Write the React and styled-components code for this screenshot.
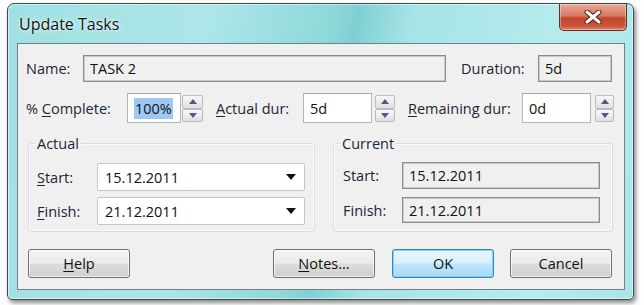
import React from 'react';
import styled, { createGlobalStyle, css } from 'styled-components';

const GlobalStyle = createGlobalStyle`
  html, body {
    margin: 0;
    background: #fdfdfd;
  }
  body {
    font-family: "Open Sans", "Noto Sans", sans-serif;
  }
`;

const Page = styled.div`
  width: 644px;
  height: 305px;
  box-sizing: border-box;
  padding: 3px 0 0 7px;
  overflow: hidden;
`;

const Window = styled.div`
  width: 627px;
  height: 297px;
  box-sizing: border-box;
  display: flex;
  flex-direction: column;
  padding: 0 8px 9px 9px;
  border: 1px solid #3d4b50;
  border-radius: 7px 7px 5px 5px;
  background: linear-gradient(100deg, #9fe0e2 0%, #ade6e8 30%, #8fd8da 48%, #7fd0d3 52%, #a6e4e6 60%, #b7ecee 85%, #a9e6e8 100%);
  box-shadow: 2px 3px 4px rgba(0, 0, 0, 0.45), inset 0 0 0 1px rgba(255, 255, 255, 0.55);
`;

const TitleBar = styled.div`
  height: 39px;
  display: flex;
  justify-content: space-between;
  align-items: flex-start;
  flex-shrink: 0;
`;

const Title = styled.span`
  padding: 9px 0 0 2px;
  font-size: 16px;
  color: #111;
  text-shadow: 0 0 6px rgba(255, 255, 255, 0.9), 0 0 2px rgba(255, 255, 255, 0.9);
`;

const CloseButton = styled.div`
  width: 68px;
  height: 27px;
  margin-right: -2px;
  box-sizing: border-box;
  display: flex;
  align-items: center;
  justify-content: center;
  border: 1px solid #6b2a20;
  border-top: none;
  border-radius: 0 0 5px 5px;
  background: linear-gradient(180deg, #e9a897 0%, #d77a64 45%, #c2452c 55%, #c9553a 85%, #e08a6c 100%);
  box-shadow: inset 0 0 0 1px rgba(255, 255, 255, 0.35);
`;

const Client = styled.div`
  flex: 1;
  display: flex;
  flex-direction: column;
  padding: 0 10px 0 8px;
  background: #f0f0f0;
  border: 1px solid #6f8286;
`;

const Row = styled.div`
  display: flex;
  align-items: center;
  height: ${p => p.$h}px;
  margin-top: ${p => p.$top}px;
  flex-shrink: 0;
`;

const Label = styled.span`
  width: ${p => p.$w}px;
  margin-left: ${p => p.$ml || 0}px;
  flex-shrink: 0;
  font-size: 14.5px;
  color: #1c2536;
  white-space: nowrap;
  u {
    text-decoration-thickness: 1px;
    text-underline-offset: 2px;
  }
`;

const fieldBase = css`
  box-sizing: border-box;
  flex-shrink: 0;
  display: flex;
  align-items: center;
  font-size: 14.5px;
  color: #111;
  white-space: nowrap;
`;

const ReadOnlyField = styled.div`
  ${fieldBase};
  width: ${p => p.$w}px;
  height: ${p => p.$h || 27}px;
  padding-left: 6px;
  background: #f0f0f0;
  border: 1px solid #8c8c8c;
  box-shadow: inset 0 0 0 1px #c9c9c9;
`;

const Input = styled.div`
  ${fieldBase};
  width: ${p => p.$w}px;
  height: 30px;
  padding-left: 6px;
  background: #fff;
  border: 1px solid #b4b6bb;
  border-top-color: #a3a6ab;
`;

const Selected = styled.span`
  background: #9cc8f3;
  padding: 1px 1px;
`;

const Spinner = styled.div`
  width: ${p => p.$w}px;
  height: 30px;
  margin-left: ${p => p.$ml}px;
  flex-shrink: 0;
  display: flex;
  flex-direction: column;
  justify-content: space-between;
  padding: 2px 0 1px;
  box-sizing: border-box;
`;

const SpinBtn = styled.div`
  height: 12px;
  display: flex;
  align-items: center;
  justify-content: center;
  border: 1px solid #b9bcc2;
  border-radius: 2px;
  background: linear-gradient(180deg, #f8f8f8 0%, #ececec 50%, #dfdfdf 100%);
`;

const Arrow = ({ down }) => (
  <svg width="8" height="5" viewBox="0 0 8 5">
    <path d={down ? 'M0 0 H8 L4 5 Z' : 'M0 5 H8 L4 0 Z'} fill="#4a5c82" />
  </svg>
);

const Spin = ({ w, ml }) => (
  <Spinner $w={w} $ml={ml}>
    <SpinBtn><Arrow /></SpinBtn>
    <SpinBtn><Arrow down /></SpinBtn>
  </Spinner>
);

const Groups = styled.div`
  display: flex;
  margin: 20px 0 0 2px;
  flex-shrink: 0;
`;

const GroupBox = styled.div`
  position: relative;
  width: ${p => p.$w}px;
  height: 89px;
  margin-left: ${p => p.$ml || 0}px;
  box-sizing: border-box;
  border: 1px solid #d3dde3;
  border-radius: 3px;
  box-shadow: inset 0 0 0 1px #fbfbfb;
  display: flex;
  flex-direction: column;
  gap: ${p => p.$gap}px;
  padding: ${p => p.$pt}px 0 0 ${p => p.$pl}px;
`;

const Legend = styled.span`
  position: absolute;
  top: -10px;
  left: 6px;
  padding: 0 2px;
  background: #f0f0f0;
  font-size: 14.5px;
  color: #1c2536;
`;

const GroupRow = styled.div`
  display: flex;
  align-items: center;
`;

const Combo = styled.div`
  ${fieldBase};
  width: 208px;
  height: 28px;
  padding: 0 8px 0 7px;
  justify-content: space-between;
  background: #fff;
  border: 1px solid #c3c6cc;
  border-radius: 2px;
`;

const ComboArrow = () => (
  <svg width="10" height="6" viewBox="0 0 10 6">
    <path d="M0 0 H10 L5 6 Z" fill="#111" />
  </svg>
);

const ButtonRow = styled.div`
  display: flex;
  width: 584px;
  height: 29px;
  margin: 17px 0 0 2px;
  flex-shrink: 0;
`;

const Button = styled.div`
  width: 102px;
  height: 29px;
  box-sizing: border-box;
  margin-left: ${p => p.$ml || '0'};
  display: flex;
  align-items: center;
  justify-content: center;
  font-size: 14.5px;
  color: #111;
  border: 1px solid ${p => (p.$default ? '#3a84bd' : '#707070')};
  border-radius: 3px;
  background: ${p => (p.$default
    ? 'linear-gradient(180deg, #eaf6fd 0%, #d9f0fc 48%, #bee6fd 52%, #a7d9f5 100%)'
    : 'linear-gradient(180deg, #f3f3f3 0%, #ebebeb 48%, #dddddd 52%, #cfcfcf 100%)')};
  box-shadow: inset 0 0 0 1px ${p => (p.$default ? 'rgba(120, 210, 245, 0.9)' : 'rgba(255, 255, 255, 0.7)')};
  u {
    text-underline-offset: 2px;
  }
`;

const CloseGlyph = () => (
  <svg width="18" height="14" viewBox="0 0 18 14">
    <path d="M3 2 L15 12 M15 2 L3 12" stroke="#5a1d14" strokeWidth="5" strokeLinecap="round" />
    <path d="M3 2 L15 12 M15 2 L3 12" stroke="#fff" strokeWidth="3" strokeLinecap="round" />
  </svg>
);

const App = () => (
  <Page>
    <GlobalStyle />
    <Window>
      <TitleBar>
        <Title>Update Tasks</Title>
        <CloseButton><CloseGlyph /></CloseButton>
      </TitleBar>
      <Client>
        <Row $h={27} $top={11}>
          <Label $w={57}>Name:</Label>
          <ReadOnlyField $w={363}>TASK 2</ReadOnlyField>
          <Label $w={77} $ml={15}>Duration:</Label>
          <ReadOnlyField $w={74}>5d</ReadOnlyField>
        </Row>
        <Row $h={30} $top={11}>
          <Label $w={101}>% <u>C</u>omplete:</Label>
          <Input $w={54}><Selected>100%</Selected></Input>
          <Spin w={21} ml={1} />
          <Label $w={87} $ml={13}><u>A</u>ctual dur:</Label>
          <Input $w={69}>5d</Input>
          <Spin w={20} ml={3} />
          <Label $w={114} $ml={13}><u>R</u>emaining dur:</Label>
          <Input $w={69}>0d</Input>
          <Spin w={19} ml={4} />
        </Row>
        <Groups>
          <GroupBox $w={287} $pt={19} $pl={8} $gap={6}>
            <Legend>Actual</Legend>
            <GroupRow>
              <Label $w={60}><u>S</u>tart:</Label>
              <Combo>15.12.2011<ComboArrow /></Combo>
            </GroupRow>
            <GroupRow>
              <Label $w={60}><u>F</u>inish:</Label>
              <Combo>21.12.2011<ComboArrow /></Combo>
            </GroupRow>
          </GroupBox>
          <GroupBox $w={280} $ml={18} $pt={18} $pl={9} $gap={8}>
            <Legend>Current</Legend>
            <GroupRow>
              <Label $w={59}>Start:</Label>
              <ReadOnlyField $w={198}>15.12.2011</ReadOnlyField>
            </GroupRow>
            <GroupRow>
              <Label $w={59}>Finish:</Label>
              <ReadOnlyField $w={198} $h={26}>21.12.2011</ReadOnlyField>
            </GroupRow>
          </GroupBox>
        </Groups>
        <ButtonRow>
          <Button><u>H</u>elp</Button>
          <Button $ml="auto"><u>N</u>otes...</Button>
          <Button $ml="17px" $default>OK</Button>
          <Button $ml="16px">Cancel</Button>
        </ButtonRow>
      </Client>
    </Window>
  </Page>
);

export default App;
